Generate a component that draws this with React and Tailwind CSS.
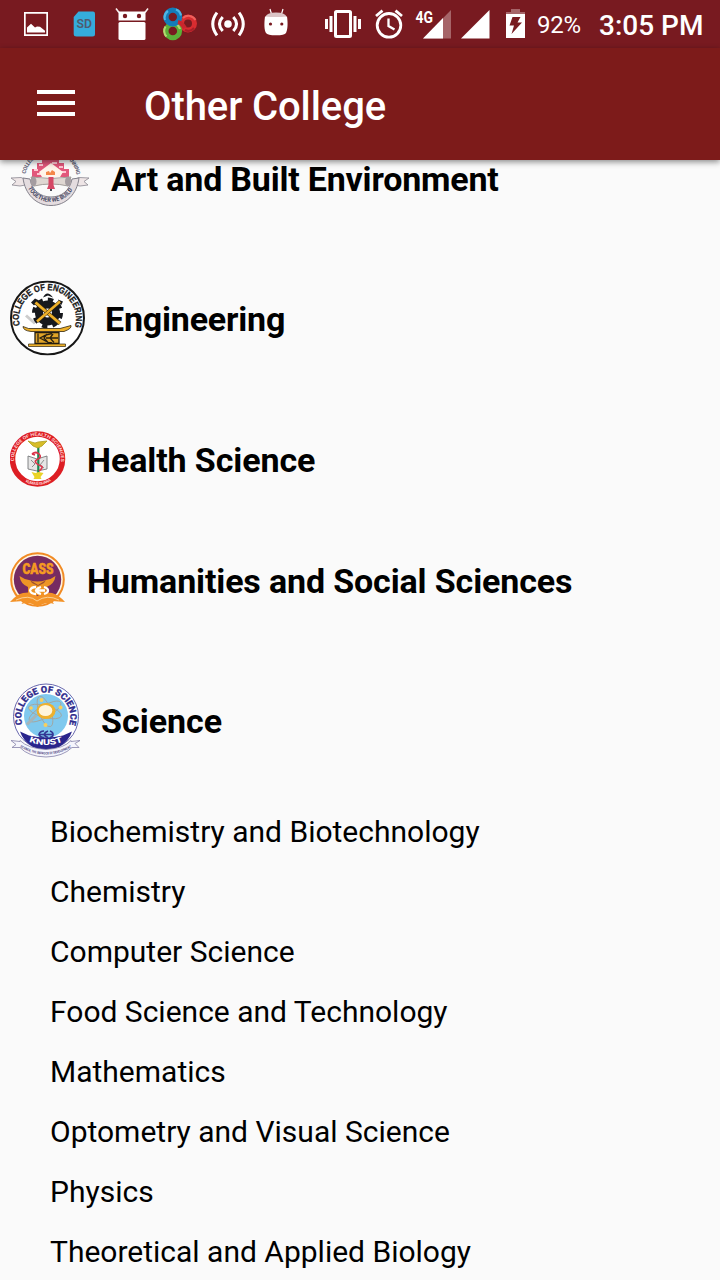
import React from 'react';

function StatusBar() {
  return (
    <div className="relative flex h-12 w-full items-center bg-[#781a20] text-white">
      <svg className="ml-6 h-12 w-6 shrink-0" viewBox="24 0 24 48">
        <path d="M24 12h24v24H24zM25.700 13.700v20.600h20.600V13.700z" fill="#fff" fillRule="evenodd" />
        <path d="M27 32.500v-5l4-3.700 4 3.800 2-1 3 .2 5 4v1.700z" fill="#fff" />
      </svg>
      <svg className="ml-[25px] h-12 w-[22px] shrink-0" viewBox="73 0 22 48">
        <path d="M78.500 11.500H93q2 0 2 2V34q0 2.500-2.500 2.500h-16q-2.800 0-2.800-2.500V17z" fill="#35acdc" />
        <text x="84.300" y="28.300" textAnchor="middle" fontSize="12" fontWeight="600" fill="#4f5b70" textLength="15.500" lengthAdjust="spacingAndGlyphs" className="font-[Roboto,sans-serif]">SD</text>
      </svg>
      <svg className="ml-5 h-12 w-[34px] shrink-0" viewBox="115 0 34 48">
        <path d="M116 8.500l3 4M148 8.500l-3 4" stroke="#f5eaea" strokeWidth="1.600" />
        <path d="M118.500 11.500h27v9h-27z" fill="#fff" />
        <rect x="118.500" y="22" width="27" height="18" rx="1.500" fill="#fff" />
        <circle cx="125" cy="16" r="2.200" fill="#781a20" />
        <circle cx="139" cy="16" r="2.200" fill="#781a20" />
      </svg>
      <svg className="ml-[13px] h-12 w-9 shrink-0" viewBox="162 0 36 48" fill="none">
        <circle cx="188" cy="23.500" r="6.500" stroke="#d82c30" strokeWidth="5" />
        <path d="M183 18a8 8 0 0 1 12.500 2" stroke="#f0605c" strokeWidth="2" />
        <path d="M185 30a7.500 7.500 0 0 0 9-2" stroke="#a81f28" strokeWidth="2" />
        <circle cx="172.800" cy="31" r="6.800" stroke="#5caf38" strokeWidth="5" />
        <path d="M165.500 26.500a8 8 0 0 0 1 10M176 24a8 8 0 0 1 4 5" stroke="#b2da70" strokeWidth="2.200" />
        <circle cx="172.800" cy="17" r="6.800" stroke="#147cb8" strokeWidth="5.200" />
        <path d="M165 20a8 8 0 0 1 3-9M176 9.500a8 8 0 0 1 5 6" stroke="#4fb6e3" strokeWidth="2.200" />
        <path d="M178 22q4 1 7 6" stroke="#c8272d" strokeWidth="4" />
      </svg>
      <svg className="ml-3 h-12 w-9 shrink-0" viewBox="210 0 36 48" fill="none" stroke="#fff" strokeWidth="3">
        <circle cx="228" cy="24" r="3.800" fill="#fff" stroke="none" />
        <path d="M222.700 17q-6.500 7 0 14M233.300 17q6.500 7 0 14M217 12.700q-8.500 11.300 0 22.600M239 12.700q8.500 11.300 0 22.600" />
      </svg>
      <svg className="ml-[18px] h-12 w-6 shrink-0" viewBox="264 0 24 48">
        <path d="M270 9l1.500 5M283 9l-1.500 5" stroke="#fff" strokeWidth="1.200" />
        <path d="M265.500 17q1-4.500 10.500-4.500t10.500 4.500z" fill="#dbc4c6" />
        <path d="M265 16.500q11 1 22 0c1 7 .7 13-1 16.500q-1.500 2.300-10 2.300t-10-2.300c-1.700-3-2-9-1-16.500z" fill="#fff" />
        <circle cx="270.500" cy="24" r="1.600" fill="#781a20" /><circle cx="281.800" cy="24" r="1.600" fill="#781a20" />
      </svg>
      <svg className="ml-9 h-12 w-[38px] shrink-0" viewBox="324 0 38 48">
        <rect x="335.500" y="11.500" width="15" height="25" rx="1" fill="none" stroke="#fff" strokeWidth="3" />
        <path d="M325 19h3v10h-3zM329.500 16h3v16h-3zM353.500 16h3v16h-3zM358 19h3v10h-3z" fill="#fff" />
      </svg>
      <svg className="ml-[13px] h-12 w-7 shrink-0" viewBox="375 0 28 48" fill="none" stroke="#fff">
        <circle cx="389" cy="25.300" r="11.800" strokeWidth="2.800" />
        <path d="M388.500 18.500v7.500l6 3.600" strokeWidth="2.300" />
        <path d="M376 16l6.500-5.300M402 16l-6.500-5.300" strokeWidth="2.800" />
      </svg>
      <svg className="ml-3 h-12 w-9 shrink-0" viewBox="415 0 36 48">
        <path d="M423 38.500L451 10v28.500z" fill="#a66468" />
        <path d="M423 38.500L443 18v20.500z" fill="#fff" />
        <text x="415.500" y="23" fontSize="16" fontWeight="700" textLength="17.500" lengthAdjust="spacingAndGlyphs" fill="#fff" className="font-[Roboto,sans-serif]">4G</text>
      </svg>
      <svg className="ml-2.5 h-12 w-[29px] shrink-0" viewBox="461 0 29 48"><path d="M461 38.500L489.500 10v28.500z" fill="#fff" /></svg>
      <svg className="ml-4 h-12 w-[19px] shrink-0" viewBox="506 0 19 48">
        <path d="M511 9h9v3h5v3h-19v-3h5z" fill="#a66468" />
        <path d="M506 14h19v24h-19z" fill="#fff" />
        <path d="M512.500 17h8l-3 5.500h4.500L511.500 34l2.500-8.500h-4.500z" fill="#781a20" />
      </svg>
      <span className="ml-3 w-[50px] whitespace-nowrap pt-0.5 text-2xl leading-7 tracking-[-0.2px]">92%</span>
      <span className="ml-3 whitespace-nowrap pt-1 text-[28px] font-medium leading-8">3:05 PM</span>
    </div>
  );
}

function ArtLogo() {
  return (
    <svg className="h-[78px] w-20 shrink-0" viewBox="10 130 80 78">
      <path id="artTop" d="M25.500 174a26 26 0 0 1 51 0" fill="none" />
      <text fontSize="5.500" fontWeight="700" fill="#626479" className="font-[Roboto,sans-serif]"><textPath href="#artTop" textLength="72">COLLEGE OF ART AND PLANNING</textPath></text>
      <path d="M11 178l10-.5 5 2 2 5-8 1.500-8-1 4-3.500zM89 178l-10-.5-5 2-2 5 8 1.500 8-1-4-3.500z" fill="#eee5e6" stroke="#8a8790" strokeWidth=".8" />
      <path d="M23 178c2 16 13 27.500 28 27.500s26-11.500 28-27.500l-7 1c-2 11-10 18-21 18s-19-7-21-18z" fill="#e4dcdf" stroke="#83818b" strokeWidth="1" />
      <path d="M32 177v-8h5v-6h5v-7h6v-9h5v9h6v7h5v6h5v8z" fill="#e2577b" />
      <path d="M34 170h4m-1 4h5m-3-9h4m2-6h4m3 4h5m2 4h4m-3 5h6" stroke="#ffc7d3" strokeWidth="2" />
      <path d="M39 172l12-9 12 9-3 5H42z" fill="#fff4ea" />
      <path d="M46 175v-3l3-1 1 2 2-3 3 2v3z" fill="#f48748" />
      <path d="M31 177q20 3 40 0l-3 9q-17-4-34 0z" fill="#dfd7d2" stroke="#918a86" strokeWidth=".8" />
      <ellipse cx="33.500" cy="181.500" rx="3" ry="5" fill="#a49ca0" /><ellipse cx="68" cy="181.500" rx="3" ry="5" fill="#a49ca0" />
      <path d="M48.500 177h5v8l1.500 4h-8l1.500-4z" fill="#d54865" /><path d="M50 189h2v2h-2z" fill="#414450" />
      <path id="artBottom" d="M28 188a25.500 25.500 0 0 0 46-1" fill="none" />
      <text fontSize="6" fontWeight="700" fill="#45475f" className="font-[Roboto,sans-serif]"><textPath href="#artBottom" textLength="54" lengthAdjust="spacingAndGlyphs">TOGETHER WE BUILD</textPath></text>
    </svg>
  );
}

function EngineeringLogo() {
  return (
    <svg className="size-[75px] shrink-0" viewBox="10 280 75 75">
      <circle cx="47.500" cy="317.500" r="36.500" fill="#fff" stroke="#171717" strokeWidth="2" />
      <path id="engArc" d="M19.800 325a28.500 28.500 0 1 1 54.500 2.500" fill="none" />
      <text fontSize="9" fontWeight="700" fill="#181818" stroke="#181818" strokeWidth=".3" className="font-['Liberation_Sans',sans-serif]"><textPath href="#engArc" textLength="105" lengthAdjust="spacingAndGlyphs">COLLEGE OF ENGINEERING</textPath></text>
      <path d="M26 315l9 8" stroke="#cdcdcd" strokeWidth="3" />
      <circle cx="47.500" cy="312.500" r="8.500" fill="none" stroke="#17191d" strokeWidth="8" />
      <circle cx="47.500" cy="312.500" r="13" fill="none" stroke="#17191d" strokeWidth="5" strokeDasharray="5.200 5" />
      <path d="M43 297q4-8 10 0l-5-2zM31 302l4-4 4 2-5 5zM58 299l5 2-2 4z" fill="#17191d" />
      <path d="M35.500 302L60 323" stroke="#32270f" strokeWidth="4" /><path d="M35.500 302L60 323" stroke="#efb129" strokeWidth="2.800" />
      <path d="M60 301L37 321" stroke="#32270f" strokeWidth="3.500" /><path d="M60 301L37 321" stroke="#efb129" strokeWidth="2.400" />
      <path d="M23 326q5 3 12 2h25l11-3q1 3-7 6H31q-8-1-8-5z" fill="#efb129" stroke="#2e2410" strokeWidth=".8" />
      <path d="M35 332h24v11H35z" fill="#e0a428" stroke="#231c10" strokeWidth="1.300" />
      <path d="M52 333q-7 1-12 4.500q6 4 12 5M46 337.500h12M47 333.500l-3 4 4 4.500M53 333.500l-3 4 4 4.500M38 333v9" stroke="#292111" strokeWidth="1.300" fill="none" />
      <path d="M28.500 343.500h37v2.500h-37z" fill="#efb129" stroke="#2c2310" strokeWidth=".7" />
    </svg>
  );
}

function HealthLogo() {
  return (
    <svg className="size-14 shrink-0" viewBox="10 431 56 56">
      <circle cx="37.500" cy="459" r="25" fill="#fff" stroke="#dd1e24" strokeWidth="5.500" />
      <path id="healthTop" d="M15 466a23.500 23.500 0 1 1 45 0" fill="none" />
      <text fontSize="4.500" fontWeight="700" fill="#ffd5d5" className="font-[Roboto,sans-serif]"><textPath href="#healthTop" startOffset="5" textLength="78" lengthAdjust="spacingAndGlyphs">COLLEGE OF HEALTH SCIENCES</textPath></text>
      <path id="healthBottom" d="M22 480q15.500 10 31 0" fill="none" />
      <text fontSize="4" fontWeight="700" fill="#ffd5d5" className="font-[Roboto,sans-serif]"><textPath href="#healthBottom" startOffset="4" textLength="27">KUMASI GHANA</textPath></text>
      <path d="M28 456l9 3 10-3v13l-10 2-9-2z" fill="#e6e6e6" stroke="#77797b" strokeWidth=".9" />
      <path d="M31 460l4 4-3 3m12-7l-4 5 4 3" stroke="#8b8f8e" fill="none" />
      <path d="M38.300 446v28" stroke="#168750" strokeWidth="2.200" />
      <path d="M28 441l7 2 3-1 9-1-5 5-4 2-5-2z" fill="#d7bd29" stroke="#afa023" strokeWidth=".8" />
      <path d="M32 454q4-3 7 0t-1 5-2 4 5 3-2 5M32 454l3 1" fill="none" stroke="#da354a" strokeWidth="1.700" />
      <path d="M31.500 472l4 1 3-1 5 1-3 4 1 2h-8l1-2z" fill="#ead327" />
    </svg>
  );
}

function HumanitiesLogo() {
  return (
    <svg className="size-14 shrink-0" viewBox="10 552 56 56">
      <circle cx="37.500" cy="579.500" r="26.300" fill="#fff3df" stroke="#f18b24" strokeWidth="2" />
      <circle cx="37.500" cy="579.500" r="23.700" fill="#762b61" />
      <text x="38" y="574" textAnchor="middle" textLength="31" lengthAdjust="spacingAndGlyphs" fontSize="14.500" fontWeight="900" fill="#f59a22" stroke="#f59a22" strokeWidth=".5" className="font-[Roboto,sans-serif]">CASS</text>
      <path d="M19.500 576q5 3.500 9.500 4 8.500 3 17 0 5-.5 9.500-4-1 8-9 11v8H28v-8q-7.500-3-8.500-11z" fill="#ed9525" />
      <path d="M30 580l8 5 8-5-2 3-6 3-6-3z" fill="#9d5030" />
      <path d="M10 602q7-8 13-9 9-2 14.500 3Q43 591 52 593q7 2 13 9l-13-1 2 3q-8-3-16.500 3-8-6-16-3l2-3z" fill="#f39227" />
      <path d="M16 600q13-6 21 1 10-7 22-1" fill="none" stroke="#fbe0b1" strokeWidth=".8" />
      <path d="M36 587q-5 0-6 3.500q1 3.500 6 3.500M41 587q-4 1-5 3.500q1 2.500 5 3.500M44 587q4 1 4 3.500t-4 3.500M37 590.500h8" fill="none" stroke="#fff" strokeWidth="2.300" />
    </svg>
  );
}

function ScienceLogo() {
  return (
    <svg className="h-[75px] w-[71px] shrink-0" viewBox="10 682.500 71 75">
      <circle cx="46" cy="716" r="32.500" fill="#fff" stroke="#6867ae" strokeWidth="1" />
      <circle cx="46" cy="715.500" r="22" fill="#80c9ee" />
      <path d="M20 731l9 4q17 4 34 0l9-4q-3 9-12 15-14 7-28 0-9-6-12-15z" fill="#2a258c" />
      <path id="sciArc" d="M22.500 724a24.500 24.500 0 1 1 47-1" fill="none" />
      <text fontSize="9" fontWeight="800" fill="#302c8d" stroke="#302c8d" strokeWidth=".3" className="font-[Roboto,sans-serif]"><textPath href="#sciArc" textLength="92" lengthAdjust="spacingAndGlyphs">COLLEGE OF SCIENCE</textPath></text>
      <g fill="none" stroke="#a6a297" strokeWidth=".8"><ellipse cx="45" cy="711" rx="17" ry="6" transform="rotate(15 45 711)" /><ellipse cx="45" cy="711" rx="16" ry="6" transform="rotate(70 45 711)" /><ellipse cx="45" cy="711" rx="18" ry="6" transform="rotate(-30 45 711)" /></g>
      <path d="M27 724l9-9" stroke="#a6b5b9" strokeWidth="3" />
      <ellipse cx="46" cy="710.500" rx="9.500" ry="8" fill="#eeb12e" /><ellipse cx="45.500" cy="710" rx="6.800" ry="5.500" fill="#fff5db" />
      <g fill="#f9cf5c"><circle cx="41.500" cy="699.500" r="2" /><circle cx="31" cy="707.500" r="1.800" /><circle cx="60.500" cy="707" r="2" /><circle cx="45.500" cy="724.500" r="2" /></g>
      <path d="M44 730.500q-4 0-5 3.500q1 3 5 3M48 730.500q-3 1-4 3.500q1 2 4 3M50 730.500q3 1 3 3.500t-3 3M39 734h13" fill="none" stroke="#343693" strokeWidth="1.700" />
      <path id="sciKnust" d="M27 740.500q19 8 38 0" fill="none" />
      <text fontSize="8" fontWeight="800" fill="#fff" className="font-[Roboto,sans-serif]"><textPath href="#sciKnust" startOffset="2" textLength="35" lengthAdjust="spacingAndGlyphs">KNUST</textPath></text>
      <path d="M11 740l9 1v-1q8 8 26 9 18-1 25-9v1l9-1-5 3 4 4h-7q-9 9-26 9.500-18-.5-26-9.500h-8l4-3z" fill="#f5f5fc" stroke="#8582aa" strokeWidth=".8" />
      <path id="sciRibbon" d="M20 746.500q26 15 52 0" fill="none" />
      <text fontSize="3.400" fontWeight="700" fill="#45417d" className="font-[Roboto,sans-serif]"><textPath href="#sciRibbon" textLength="54" lengthAdjust="spacingAndGlyphs">SCIENCE, THE BEDROCK OF DEVELOPMENT</textPath></text>
    </svg>
  );
}

const colleges = [
  { name: 'Art and Built Environment', Logo: ArtLogo, row: 'h-[100px] gap-[21px]', logo: '-translate-y-[11px]', label: 'pb-0.5 tracking-[-0.2px]' },
  { name: 'Engineering', Logo: EngineeringLogo, row: 'h-44 gap-5', logo: '-translate-y-[0.5px]', label: 'pt-0.5 tracking-[-0.2px]' },
  { name: 'Health Science', Logo: HealthLogo, row: 'h-[106px] gap-[21px]', logo: '', label: 'pt-0.5 tracking-[-0.1px]' },
  { name: 'Humanities and Social Sciences', Logo: HumanitiesLogo, row: 'h-[136px] gap-[21px]', logo: '', label: 'pt-0.5 tracking-[-0.14px]' },
  { name: 'Science', Logo: ScienceLogo, row: 'h-36 gap-5', logo: '', label: 'pt-0.5' },
];

const departments = [
  'Biochemistry and Biotechnology', 'Chemistry', 'Computer Science', 'Food Science and Technology',
  'Mathematics', 'Optometry and Visual Science', 'Physics', 'Theoretical and Applied Biology',
];

export default function App() {
  return (
    <div className="flex h-[1280px] w-[720px] flex-col overflow-hidden bg-[#fafafa] font-[Roboto,sans-serif] text-black">
      <StatusBar />
      <header className="relative z-10 flex h-28 shrink-0 items-center bg-[#7d1b1a] text-white shadow-[0_2px_6px_rgba(0,0,0,0.45)]">
        <button aria-label="Open navigation" className="ml-[37px] flex w-[38px] flex-col gap-[7px] pb-0.5">
          <span className="h-1 w-full bg-white" />
          <span className="h-1 w-full bg-white" />
          <span className="h-1 w-full bg-white" />
        </button>
        <h1 className="ml-[69px] pt-1.5 text-[40px] font-medium leading-none tracking-[-0.1px]">Other College</h1>
      </header>
      <main className="min-h-0 flex-1 overflow-hidden">
        <div className="-mt-[30px]">
          {colleges.map(({ name, Logo, row, logo, label }) => (
            <section key={name} className={`flex items-center pl-2.5 ${row}`}>
              <div className={logo}><Logo /></div>
              <h2 className={`whitespace-nowrap text-[34px] font-bold leading-10 ${label}`}>{name}</h2>
            </section>
          ))}
        </div>
        <ul className="pt-2.5">
          {departments.map((name) => (
            <li key={name} className="flex h-[60px] items-center pl-[50px] text-[30px] leading-9">{name}</li>
          ))}
        </ul>
      </main>
    </div>
  );
}
